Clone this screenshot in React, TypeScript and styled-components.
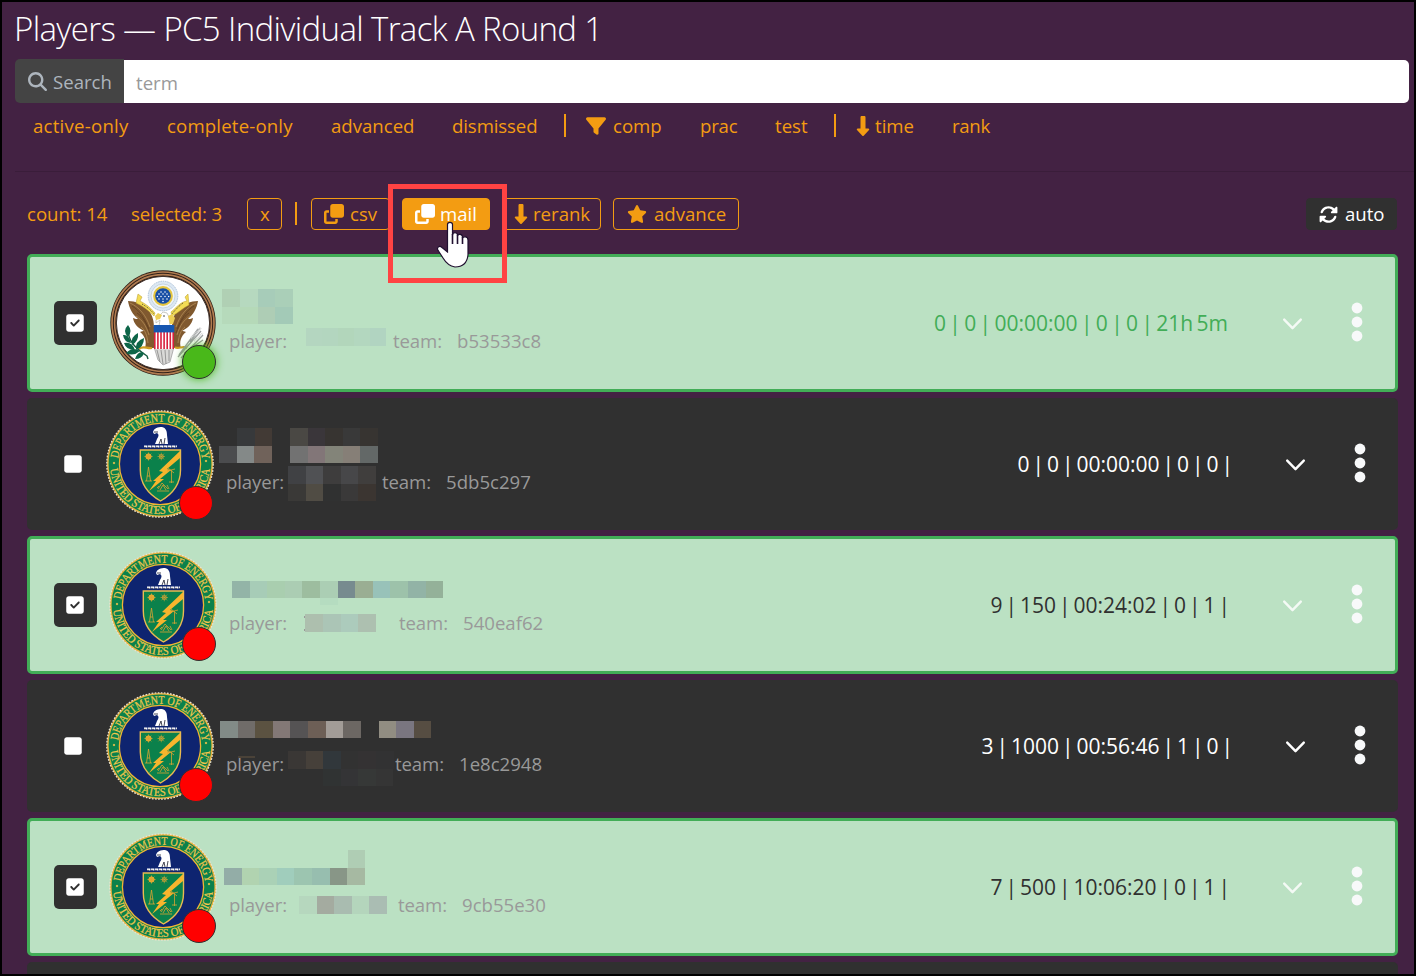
import React from "react";
import styled, { createGlobalStyle } from "styled-components";
import {
  FaMagnifyingGlass,
  FaFilter,
  FaDownLong,
  FaClone,
  FaStar,
  FaRotate,
  FaSquare,
  FaSquareCheck,
} from "react-icons/fa6";

const Global = createGlobalStyle`
  * { box-sizing: border-box; }
  body { margin: 0; background: #000; }
  svg { display: block; flex: none; }
`;

const ORANGE = "#f39c12";

const Page = styled.main`
  position: relative;
  width: 1416px;
  height: 976px;
  border: 2px solid #000;
  background: #432243;
  overflow: hidden;
  color: ${ORANGE};
  font: 18.6px/28px "Open Sans", "Noto Sans", sans-serif;
  white-space: nowrap;
`;

const Title = styled.h1`
  margin: 0 0 0 12px;
  height: 57px;
  padding-top: 4px;
  color: #fff;
  font-size: 33px;
  font-weight: 300;
  line-height: 45px;
  letter-spacing: -0.65px;
`;

const SearchGroup = styled.div`
  display: flex;
  align-items: center;
  height: 44px;
  margin: 0 5px 0 13px;
`;

const SearchLabel = styled.label`
  display: flex;
  align-items: center;
  gap: 6px;
  width: 109px;
  height: 44px;
  padding: 1px 0 0 13px;
  border-radius: 5px 0 0 5px;
  background: #444;
  color: #adb5bd;
`;

const SearchInput = styled.input`
  flex: 1;
  height: 43px;
  padding: 3px 12px 0;
  border: 0;
  border-radius: 0 5px 5px 0;
  background: #fff;
  font: inherit;
  &::placeholder { color: #999; opacity: 1; }
`;

const Filters = styled.nav`
  display: flex;
  align-items: center;
  height: 69px;
  margin-left: 13px;
  padding: 0 0 22px 18px;
  border-bottom: 1px solid #3a1d3a;
`;

const Cell = styled.span<{ $w: number; $after?: number; $ls?: number }>`
  display: flex;
  align-items: center;
  flex: none;
  width: ${(p) => p.$w}px;
  margin-right: ${(p) => p.$after ?? 0}px;
  letter-spacing: ${(p) => p.$ls ?? 0}px;
`;

const Bar = styled.span<{ $after: number }>`
  width: 2px;
  height: 23px;
  margin: 0 ${(p) => p.$after}px 2px 0;
  background: ${ORANGE};
`;

const Toolbar = styled.div`
  display: flex;
  align-items: center;
  height: 32px;
  margin: 26px 17px 24px 25px;
`;

const Button = styled.button<{ $w: number; $after?: number; $kind?: "solid" | "dark"; $gap?: number; $pad?: number }>`
  display: flex;
  align-items: center;
  flex: none;
  gap: ${(p) => p.$gap ?? 7}px;
  width: ${(p) => p.$w}px;
  height: 32px;
  margin-right: ${(p) => p.$after ?? 0}px;
  padding: 0 0 0 ${(p) => p.$pad ?? 12}px;
  border: 1px solid ${(p) => (p.$kind === "dark" ? "#303030" : ORANGE)};
  border-radius: 4px;
  background: ${(p) => (p.$kind === "dark" ? "#303030" : p.$kind === "solid" ? ORANGE : "transparent")};
  color: ${(p) => (p.$kind ? "#fff" : ORANGE)};
  font: inherit;
`;

const Spacer = styled.span`
  flex: 1;
`;

const List = styled.section`
  display: flex;
  flex-direction: column;
  gap: 6px;
  margin: 0 16px 0 25px;
`;

const Row = styled.article<{ $on: boolean }>`
  display: flex;
  align-items: center;
  flex: none;
  height: ${(p) => (p.$on ? 138 : 132)}px;
  border: ${(p) => (p.$on ? "3px solid #42ad57" : "0")};
  border-radius: 5px;
  background: ${(p) => (p.$on ? "#bbe1c3" : "#303030")};
  color: ${(p) => (p.$on ? "#303030" : "#fff")};
`;

const Check = styled.button<{ $on: boolean }>`
  display: flex;
  align-items: center;
  justify-content: center;
  flex: none;
  width: 43px;
  height: 44px;
  margin: 0 13px 0 24px;
  padding: 0;
  border: 0;
  border-radius: 5px;
  background: ${(p) => (p.$on ? "#303030" : "transparent")};
  color: #fff;
  svg { margin-left: ${(p) => (p.$on ? -1 : 0)}px; }
`;

const Avatar = styled.div`
  position: relative;
  flex: none;
  width: 106px;
  height: 106px;
`;

const Status = styled.span<{ $live: boolean }>`
  position: absolute;
  right: 0;
  bottom: -3px;
  width: 34px;
  height: 34px;
  border: 1.5px solid #303030;
  border-radius: 50%;
  background: ${(p) => (p.$live ? "#49b81a" : "#f00")};
  box-shadow: ${(p) => (p.$live ? "0 0 9px #49b81a" : "none")};
`;

const Info = styled.div`
  position: relative;
  display: flex;
  align-items: flex-end;
  flex: 1;
  height: 132px;
  margin-left: 6px;
  padding: 0 0 34px 7px;
  color: #999;
`;

const Mosaic = styled.svg`
  position: absolute;
  left: -4px;
  top: 0;
`;

const Stats = styled.div<{ $live?: boolean }>`
  margin-right: ${(p) => (p.$live ? 53 : 51)}px;
  color: ${(p) => (p.$live ? "#42ad57" : "inherit")};
  font-size: 21px;
  word-spacing: ${(p) => (p.$live ? -2.1 : -2.5)}px;
`;

const Expand = styled.div<{ $on: boolean }>`
  width: 22px;
  margin-right: 48px;
  color: ${(p) => (p.$on ? "#f4faf5" : "#fff")};
`;

const More = styled.div`
  width: 12px;
  margin: 0 32px 3px 0;
`;

const Highlight = styled.div`
  position: absolute;
  left: 386px;
  top: 182px;
  width: 119px;
  height: 99px;
  border: 5px solid #ff4343;
`;

const Pointer = styled.svg`
  position: absolute;
  left: 433px;
  top: 216px;
`;

function GreatSeal() {
  const wing = (
    <g>
      <path d="M-35-22C-28-22-20-19-14-12C-10-7-9-1-9 5V25H-18C-16 19-18 13-23 9C-21 8-20 8-19 8C-25 5-29 1-30-5C-28-4-26-4-25-4C-30-8-34-15-35-22Z" fill="#80592f" />
      <path d="M-33-20C-24-16-17-8-13 4M-27-7C-21-3-17 2-14 12M-22 4C-18 7-16 12-15 20" stroke="#b28b57" strokeWidth=".8" fill="none" />
      <path d="M-31-17C-24-13-19-6-14 6M-26-10C-20-6-17 0-13 10" stroke="#5b3b1e" strokeWidth=".7" fill="none" />
    </g>
  );
  return (
    <svg width="106" height="106" viewBox="-53 -53 106 106">
      <circle r="52.7" fill="#302019" />
      <circle r="51" fill="none" stroke="#b17c50" strokeWidth="1.7" />
      <circle r="48.4" fill="none" stroke="#b17c50" strokeWidth="1.6" />
      <circle r="46.6" fill="#fff" stroke="#37251c" strokeWidth=".9" />
      <circle cy="-27" r="14.8" fill="#dce8f3" stroke="#9eb5ce" strokeWidth=".8" strokeDasharray="1.5 .8" />
      <circle cy="-27" r="12" fill="#eef4f8" stroke="#b8c8d9" strokeWidth=".7" />
      <circle cy="-27" r="9.9" fill="#e6c63f" />
      <circle cy="-27" r="7.8" fill="#174fa5" />
      {[[-2, -31], [2, -31], [-4, -29], [0, -29], [4, -29], [-5.6, -26.6], [-2, -26.6], [2, -26.6], [5.6, -26.6], [-4, -24], [0, -24], [4, -24], [0, -21.6]].map(([x, y]) => (
        <circle key={`${x},${y}`} cx={x} cy={y} r=".75" fill="#fff" />
      ))}
      {wing}
      <g transform="scale(-1 1)">{wing}</g>
      <path d="M-25-29L-21-26-23-22C-17-19-12-15-8-10L-9-7C-15-13-20-17-27-20Z" fill="#f3dc55" stroke="#b99a29" strokeWidth=".5" />
      <path d="M25-29L22-26 24-22C17-21 13-15 8-11L9-7C15-10 20-15 26-18Z" fill="#f3dc55" stroke="#b99a29" strokeWidth=".5" />
      <path d="M-21-19C-16-16-12-13-9-9M20-20C16-17 12-13 9-9" stroke="#665d38" strokeWidth="1" strokeDasharray="1.2 .8" fill="none" />
      <path d="M-7-3L-2-9 0-11 4-10 6-6 7 3H-4L-3-3-7 0Z" fill="#fff" stroke="#b5b4aa" strokeWidth=".7" />
      <path d="M-8-7L-5-10-1-8-3-4-7-3ZM5-7L9-9 12-5 10 1 7 1Z" fill="#edcf57" />
      <circle cx="1" cy="-7" r=".8" fill="#333" />
      <path d="M-9 24L-5 37 0 42 7 39 11 24Z" fill="#d9d9d7" stroke="#888" strokeWidth=".6" />
      <path d="M-6 27L-3 39M-2 27L0 41M2 27L3 41M6 27L6 38" stroke="#868686" strokeWidth=".8" />
      <path d="M-9 2H11V26H-9Z" fill="#fff" />
      {[-8.2, -5.1, -2, 1.1, 4.2, 7.3, 10.2].map((x) => (
        <path key={x} d={`M${x} 9V26`} stroke="#d81f3c" strokeWidth="1.6" />
      ))}
      <path d="M-9.3 2H11.3V9.4H-9.3Z" fill="#1656af" />
      <path d="M-24 26C-20 22-16 26-11 25M24 25C20 22 15 27 12 24" stroke="#cf9d22" strokeWidth="2.2" fill="none" />
      <path d="M-35 6C-35 18-28 25-16 33L-15 36" stroke="#185c42" strokeWidth="1.4" fill="none" />
      <path d="M-35 2Q-41 8-35 14-30 8-35 2ZM-40 12Q-34 11-32 20-39 19-40 12ZM-25 10Q-33 14-31 22-24 18-25 10ZM-39 20Q-31 18-28 27-37 27-39 20ZM-19 15Q-28 18-27 27-19 24-19 15ZM-37 30Q-30 23-23 28-30 34-37 30ZM-28 36Q-25 27-19 30-21 36-28 36Z" fill="#0d6548" />
      <path d="M15 34L38 8M18 35L40 12M16 32L35 6M21 30L40 17M27 19L37 5" stroke="#9c9fa0" strokeWidth="1.3" />
      <path d="M28 15L38 5M31 18L40 10" stroke="#d7d8d8" strokeWidth="2.2" strokeDasharray="1 .7" />
    </svg>
  );
}

function EnergySeal({ id }: { id: string }) {
  return (
    <svg width="108" height="108" viewBox="-54 -54 108 108" style={{ margin: "-1px 0 0 -1px" }}>
      <circle r="53" fill="#e8b13c" />
      <circle r="53.2" fill="none" stroke="#e9e3cd" strokeWidth="1.3" strokeDasharray="1.7 1.4" />
      <circle r="51.4" fill="#0b814b" />
      <circle r="40.6" fill="#0e2470" stroke="#f1b434" strokeWidth="1.3" />
      <path id={`${id}-top`} d="M-42.3 0A42.3 42.3 0 0 1 42.3 0" fill="none" />
      <path id={`${id}-bottom`} d="M-50 0A50 50 0 0 0 50 0" fill="none" />
      <g fill="#f3c64b" stroke="#f3c64b" strokeWidth=".2" fontFamily="Liberation Serif, serif" fontSize="11.8">
        <text textLength="123" lengthAdjust="spacingAndGlyphs">
          <textPath href={`#${id}-top`} startOffset="5.5" textLength="123" lengthAdjust="spacingAndGlyphs">DEPARTMENT OF ENERGY</textPath>
        </text>
        <text textLength="147" lengthAdjust="spacingAndGlyphs">
          <textPath href={`#${id}-bottom`} startOffset="5" textLength="147" lengthAdjust="spacingAndGlyphs">UNITED STATES OF AMERICA</textPath>
        </text>
        <circle cx="-46" cy="-1" r="1" />
        <circle cx="46" cy="-3" r="1" />
      </g>
      <path d="M-7-32C-6-36-2-37 2-37C6-36 7-33 7-29L8-20-5-20-3-25C-1-28-1-30-3-31L-6-30Z" fill="#fff" />
      <path d="M-6-32L-2-32M-1-20L1-25 2-20M4-20L5-26" stroke="#1a1d2c" strokeWidth=".8" fill="none" />
      <path d="M-16-17.5H17" stroke="#fff" strokeWidth="2" strokeDasharray="3.4 .6" />
      <path d="M-16-16.7H17" stroke="#15171f" strokeWidth=".6" strokeDasharray="2 2" />
      <path d="M-19.7-14H20.5V6C20.5 21 11 31 .5 37C-10 31-19.7 21-19.7 6Z" fill="#0b814b" stroke="#e9ba50" strokeWidth="1.4" />
      <path d="M20-13L-1 7 3 8-7 17-4 17-11 27 4 15 0 15 11 6 7 5 20-6Z" fill="#f7b52d" />
      <g stroke="#d9a332" fill="none" strokeWidth=".8">
        <circle cx="-11.5" cy="-7.5" r="2.7" fill="#f7b52d" />
        <path d="M-15.5-7.5H-7.5M-11.5-11.5V-3.5M-14.3-10.3L-8.7-4.7M-8.7-10.3L-14.3-4.7" />
        <path d="M-2.5-7.5H5M1.3-11.3V-3.7M-1.5-10.3L4-4.7M4-10.3L-1.5-4.7" strokeWidth=".6" />
        <circle cx="1.3" cy="-7.5" r="2" />
        <path d="M-13.5 17L-11.5 3-9.5 17M-13 12H-10M-15 17H-8M11.5 19V6M7 7L15 5M8 4L14 9M9 18H14M-3 27H9M-2 25L2 19 8 25M0 26L3 21 6 26M-1 22L-3 24M7 21L9 25" />
      </g>
    </svg>
  );
}

type Block = [x: number, y: number, w: number, h: number, color: string];

/* A run of adjacent blocks, one for each colour, starting at x. */
const run = (x: number, y: number, colors: string, h = 17.6, w = 17.6): Block[] =>
  colors.split(" ").map((c, i) => [Math.round(x + i * w), y, Math.round(x + (i + 1) * w) - Math.round(x + i * w), h, `#${c}`]);

interface Player {
  on: boolean;
  live?: boolean;
  team: string;
  labelWidth: number;
  stats: string;
  blocks: Block[];
}

const players: Player[] = [
  {
    on: true, live: true, team: "b53533c8", labelWidth: 164, stats: "0 | 0 | 00:00:00 | 0 | 0 | 21h 5m",
    blocks: [
      ...run(4, 32, "b0d0b4 b6d9bf a7ccb9 aacfb8", 18, 17.75),
      ...run(4, 50, "b6dabb b5d9b8 aecdb5 a3cab7", 17, 17.75),
      ...run(88, 71, "b4d6c0 b3d6bf b2d6bb b3d7bf b1d4c1", 18, 16),
    ],
  },
  {
    on: false, team: "5db5c297", labelWidth: 156, stats: "0 | 0 | 00:00:00 | 0 | 0 |",
    blocks: [
      ...run(22, 30, "37393b 423a35", 18), ...run(75, 30, "4a4844 3a363a 373431 393939 373431", 18),
      ...run(4, 48, "4b4c4e 848988 70625a", 17), ...run(75, 48, "727272 827678 838479 867f77 636867", 17),
      ...run(73, 68, "404144 505154 3e3d3d 474749 403e3d", 18), ...run(73, 86, "3a3937 504c44 303131 3a3939 3b3531", 17),
    ],
  },
  {
    on: true, team: "540eaf62", labelWidth: 170, stats: "9 | 150 | 00:24:02 | 0 | 1 |",
    blocks: [
      ...run(14, 42, "93b4a7 a7ccb7 a9ceaf abcdb3 9dbd9f abceb4 778b8f 9aae93 98c2b9 9dc2aa 92b3a6 94b199", 17),
      [102, 59, 18, 7, "#b5dcc0"], [86, 77, 1, 2, "#999"], [86, 90, 1, 2, "#999"],
      ...run(87, 75, "adbfae abc5b6 accbbc adc0b0", 18, 17.75),
    ],
  },
  {
    on: false, team: "1e8c2948", labelWidth: 169, stats: "3 | 1000 | 00:56:46 | 1 | 0 |",
    blocks: [
      ...run(5, 41, "828b87 706c69 5b5241 837876 555354 6d5f56 a29c97 6c6763", 17),
      ...run(164, 41, "918d82 7a7680 564d42", 17, 17.4), [23, 76, 17, 2, "#4a4238"],
      ...run(73, 71, "3a3735 46403a 31373b 323232 343233 323233", 18),
      ...run(108, 89, "303333 343436 363837 353535", 17),
    ],
  },
  {
    on: true, team: "9cb55e30", labelWidth: 169, stats: "7 | 500 | 10:06:20 | 0 | 1 |",
    blocks: [
      [130, 29, 17, 18, "#afcdb4"],
      ...run(6, 47, "93ada7 b1d3b0 aad1b6 a0cdbc 9cc5b0 97beaf 889687 a6b9a2", 17),
      ...run(81, 75, "b6d7be a4aba0 a9bcb0 b4d5bc aabdb3", 18),
    ],
  },
];

function PlayerRow({ p, index }: { p: Player; index: number }) {
  return (
    <Row $on={p.on}>
      <Check $on={p.on}>{p.on ? <FaSquareCheck size={20} /> : <FaSquare size={20} />}</Check>
      <Avatar>
        {p.live ? <GreatSeal /> : <EnergySeal id={`seal-${index}`} />}
        <Status $live={!!p.live} />
      </Avatar>
      <Info>
        <Cell $w={p.labelWidth} $ls={-0.1}>player:</Cell>
        <Cell $w={64} $ls={-0.1}>team:</Cell>
        <Cell $w={90}>{p.team}</Cell>
        <Mosaic width="240" height="132" shapeRendering="crispEdges">
          {p.blocks.map(([x, y, w, h, c], i) => (
            <rect key={i} x={x} y={y} width={w} height={h} fill={c} />
          ))}
        </Mosaic>
      </Info>
      <Stats $live={p.live}>{p.stats}</Stats>
      <Expand $on={p.on}>
        <svg width="22" height="22" viewBox="0 0 22 22" fill="none" stroke="currentColor" strokeWidth="2.4" strokeLinecap="round" strokeLinejoin="round">
          <path d="M3.2 7.6L11.5 16.2L19.8 7.6" />
        </svg>
      </Expand>
      <More>
        <svg width="12" height="40" viewBox="0 0 12 40" fill="#f8f9fa">
          <circle cx="6" cy="6" r="5.4" />
          <circle cx="6" cy="20" r="5.4" />
          <circle cx="6" cy="34" r="5.4" />
        </svg>
      </More>
    </Row>
  );
}

export default function App() {
  return (
    <Page>
      <Global />
      <Title>Players — PC5 Individual Track A Round 1</Title>
      <SearchGroup>
        <SearchLabel><FaMagnifyingGlass size={19} />Search</SearchLabel>
        <SearchInput placeholder="term" />
      </SearchGroup>
      <Filters>
        <Cell $w={96} $after={38} $ls={0.25}>active-only</Cell>
        <Cell $w={126} $after={38} $ls={0.17}>complete-only</Cell>
        <Cell $w={83} $after={38}>advanced</Cell>
        <Cell $w={85} $after={27} $ls={-0.1}>dismissed</Cell>
        <Bar $after={20} />
        <Cell $w={27}><FaFilter size={20} /></Cell>
        <Cell $w={49} $after={38}>comp</Cell>
        <Cell $w={37} $after={38} $ls={-0.2}>prac</Cell>
        <Cell $w={32} $after={27}>test</Cell>
        <Bar $after={17} />
        <Cell $w={22}><FaDownLong size={20} /></Cell>
        <Cell $w={39} $after={38}>time</Cell>
        <Cell $w={37} $ls={-0.3}>rank</Cell>
      </Filters>
      <Toolbar>
        <Cell $w={80} $after={24}>count: 14</Cell>
        <Cell $w={92} $after={24} $ls={-0.1}>selected: 3</Cell>
        <Button $w={35} $after={13}>x</Button>
        <Bar $after={14} />
        <Button $w={79} $after={12} $gap={6}><FaClone size={20} />csv</Button>
        <Button $w={88} $after={12} $gap={5} $kind="solid"><FaClone size={20} />mail</Button>
        <Button $w={99} $after={12} $gap={2} $pad={8}><FaDownLong size={20} />rerank</Button>
        <Button $w={126} $gap={7} $pad={13}><FaStar size={20} />advance</Button>
        <Spacer />
        <Button $w={91} $gap={7} $kind="dark"><FaRotate size={19} />auto</Button>
      </Toolbar>
      <List>
        {players.map((p, i) => <PlayerRow key={p.team} p={p} index={i} />)}
        <Row $on={false} />
      </List>
      <Highlight />
      <Pointer width="36" height="50" viewBox="0 0 36 50">
        <path d="M12.5 6.5C12.5 3.6 17.5 3.6 17.5 6.5V17C17.5 14 22.5 14 22.5 17V18C23 15.5 27.5 16 27.5 19V20C28.5 18 33 18.5 33 22V37C32 46 27 49 20 49C14 48 11 45 8 40L3.5 33C1 30 4 27 7 29.5L12.5 34Z" fill="#fff" stroke="#201030" strokeWidth="1.2" />
        <path d="M17.5 16V26M22.5 17V26M27.5 19V26" stroke="#201030" strokeWidth="1.6" />
      </Pointer>
    </Page>
  );
}
